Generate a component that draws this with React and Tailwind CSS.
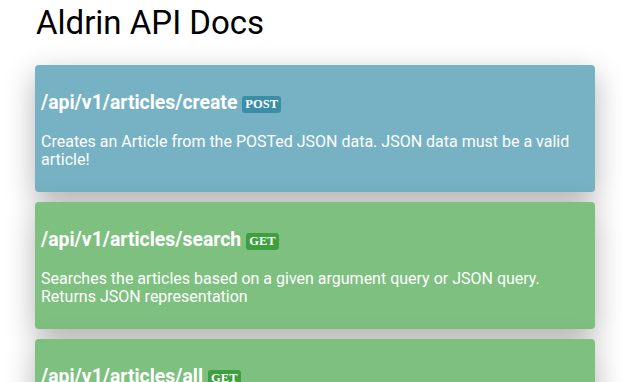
import React from 'react';

const endpoints = [
  {
    path: '/api/v1/articles/create',
    method: 'POST',
    desc: 'Creates an Article from the POSTed JSON data. JSON data must be a valid article!',
  },
  {
    path: '/api/v1/articles/search',
    method: 'GET',
    desc: 'Searches the articles based on a given argument query or JSON query. Returns JSON representation',
  },
  {
    path: '/api/v1/articles/all',
    method: 'GET',
    desc: 'Returns all the articles as a JSON array',
  },
];

const styles = {
  POST: { card: 'bg-[#76b2c3]', badge: 'bg-[#3a8ea6]' },
  GET: { card: 'bg-[#7ec07f]', badge: 'bg-[#3e9e40]' },
};

export default function App() {
  return (
    <div className="min-h-screen bg-white pl-[35px] pr-[28px] font-['Roboto',sans-serif]">
      <h1 className="pt-[4px] pl-[1px] text-[33px] font-normal leading-[37.5px] text-black">Aldrin API Docs</h1>

      <div className="mt-[23px] flex flex-col gap-[10px]">
        {endpoints.map((ep) => {
          const s = styles[ep.method];
          return (
            <div
              key={ep.path}
              className={`${s.card} rounded-[4px] px-[6px] pt-[27px] pb-[21.5px] text-white shadow-[0_10px_30px_rgba(0,0,0,0.3)]`}
            >
              <h3 className="h-[22px] text-[19.4px] font-bold leading-[22px]">
                {ep.path}
                <span
                  className={`${s.badge} ml-[5px] inline-block rounded-[3px] px-[3px] align-[1px] font-['Liberation_Serif',serif] text-[12.5px] font-bold leading-[17px]`}
                >
                  {ep.method}
                </span>
              </h3>
              <p className="mt-[19px] text-[16px] leading-[18.75px]">{ep.desc}</p>
            </div>
          );
        })}
      </div>
    </div>
  );
}
